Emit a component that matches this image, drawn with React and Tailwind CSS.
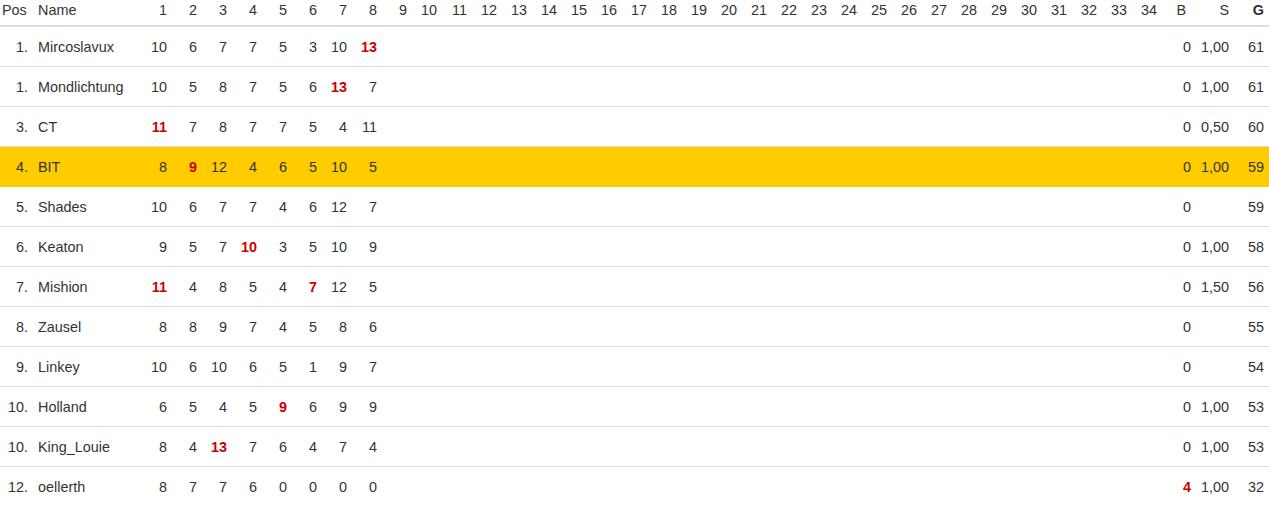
const rows = [
  ["1.", "Mircoslavux", ["10", "6", "7", "7", "5", "3", "10", "13*"], "0", "1,00", "61"],
  ["1.", "Mondlichtung", ["10", "5", "8", "7", "5", "6", "13*", "7"], "0", "1,00", "61"],
  ["3.", "CT", ["11*", "7", "8", "7", "7", "5", "4", "11"], "0", "0,50", "60"],
  ["4.", "BIT", ["8", "9*", "12", "4", "6", "5", "10", "5"], "0", "1,00", "59", true],
  ["5.", "Shades", ["10", "6", "7", "7", "4", "6", "12", "7"], "0", "", "59"],
  ["6.", "Keaton", ["9", "5", "7", "10*", "3", "5", "10", "9"], "0", "1,00", "58"],
  ["7.", "Mishion", ["11*", "4", "8", "5", "4", "7*", "12", "5"], "0", "1,50", "56"],
  ["8.", "Zausel", ["8", "8", "9", "7", "4", "5", "8", "6"], "0", "", "55"],
  ["9.", "Linkey", ["10", "6", "10", "6", "5", "1", "9", "7"], "0", "", "54"],
  ["10.", "Holland", ["6", "5", "4", "5", "9*", "6", "9", "9"], "0", "1,00", "53"],
  ["10.", "King_Louie", ["8", "4", "13*", "7", "6", "4", "7", "4"], "0", "1,00", "53"],
  ["12.", "oellerth", ["8", "7", "7", "6", "0", "0", "0", "0"], "4*", "1,00", "32"],
];

const rounds = Array.from({ length: 34 }, (_, i) => i + 1);

function Val({ v }) {
  if (v && v.endsWith("*")) {
    return <span className="font-bold text-[#cc0000]">{v.slice(0, -1)}</span>;
  }
  return <span>{v}</span>;
}

const grid = "grid grid-cols-[33px_107px_repeat(34,30px)_34px_38px_37px]";

export default function App() {
  return (
    <div className="w-[1269px] h-[507px] bg-white text-[#333] text-[14.4px] overflow-hidden" style={{ fontFamily: '"Liberation Sans", Arial, sans-serif' }}>
      <div className={`${grid} h-[27px] border-b-2 border-[#ddd] items-start`}>
        <div className="pl-[2px]">Pos</div>
        <div className="pl-[5px]">Name</div>
        {rounds.map((r) => (
          <div key={r} className="text-right pr-[3px]">{r}</div>
        ))}
        <div className="text-right pr-[8px]">B</div>
        <div className="text-right pr-[3px]">S</div>
        <div className="text-right pr-[5px] font-bold">G</div>
      </div>
      {rows.map(([pos, name, vals, b, s, g, hl], i) => (
        <div
          key={i}
          className={`${grid} h-[40px] items-center pt-[2px] ${i < rows.length - 1 ? "border-b" : ""} ${hl ? "bg-[#ffcc00] border-[#ffcc00]" : "border-[#ddd]"}`}
        >
          <div className="text-right pr-[5px]">{pos}</div>
          <div className="pl-[5px] whitespace-nowrap">{name}</div>
          {rounds.map((r) => (
            <div key={r} className="text-right pr-[3px]">
              <Val v={vals[r - 1]} />
            </div>
          ))}
          <div className="text-right pr-[3px]"><Val v={b} /></div>
          <div className="text-right pr-[3px]">{s}</div>
          <div className="text-right pr-[5px]">{g}</div>
        </div>
      ))}
    </div>
  );
}
